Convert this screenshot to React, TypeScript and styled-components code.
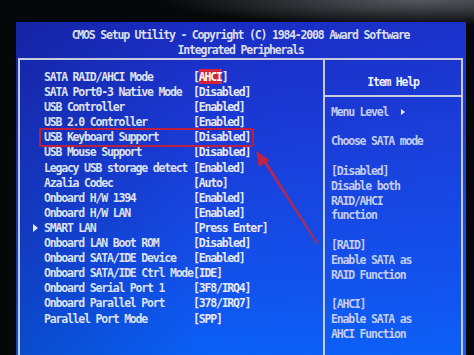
import styled, { createGlobalStyle } from 'styled-components';

const GlobalStyle = createGlobalStyle`
  html, body {
    margin: 0;
    padding: 0;
    background: #050608;
  }
`;

type Setting = { label: string; value: string; submenu?: boolean; selected?: boolean };

const settings: Setting[] = [
  { label: 'SATA RAID/AHCI Mode', value: 'AHCI', selected: true },
  { label: 'SATA Port0-3 Native Mode', value: 'Disabled' },
  { label: 'USB Controller', value: 'Enabled' },
  { label: 'USB 2.0 Controller', value: 'Enabled' },
  { label: 'USB Keyboard Support', value: 'Disabled' },
  { label: 'USB Mouse Support', value: 'Disabled' },
  { label: 'Legacy USB storage detect', value: 'Enabled' },
  { label: 'Azalia Codec', value: 'Auto' },
  { label: 'Onboard H/W 1394', value: 'Enabled' },
  { label: 'Onboard H/W LAN', value: 'Enabled' },
  { label: 'SMART LAN', value: 'Press Enter', submenu: true },
  { label: 'Onboard LAN Boot ROM', value: 'Disabled' },
  { label: 'Onboard SATA/IDE Device', value: 'Enabled' },
  { label: 'Onboard SATA/IDE Ctrl Mode', value: 'IDE' },
  { label: 'Onboard Serial Port 1', value: '3F8/IRQ4' },
  { label: 'Onboard Parallel Port', value: '378/IRQ7' },
  { label: 'Parallel Port Mode', value: 'SPP' },
];

const helpLines = [
  '',
  'Choose SATA mode',
  '',
  '[Disabled]',
  'Disable both',
  'RAID/AHCI',
  'function',
  '',
  '[RAID]',
  'Enable SATA as',
  'RAID Function',
  '',
  '[AHCI]',
  'Enable SATA as',
  'AHCI Function',
];

function App() {
  return (
    <>
      <GlobalStyle />
      <Monitor>
        <Screen>
          <Title>
            <div>CMOS Setup Utility - Copyright (C) 1984-2008 Award Software</div>
            <div>Integrated Peripherals</div>
          </Title>
          <Frame>
            <SettingsList>
              {settings.map((s) => (
                <Row key={s.label}>
                  <Marker>{s.submenu ? <Triangle $size={4} /> : null}</Marker>
                  <Label>{s.label}</Label>
                  <Value>
                    [{s.selected ? <Highlight>{s.value}</Highlight> : s.value}]
                  </Value>
                </Row>
              ))}
            </SettingsList>
            <HelpPanel>
              <HelpHeader>Item Help</HelpHeader>
              <HelpBody>
                <HelpLine>
                  Menu Level
                  <Triangle $size={3.5} $gap={13} />
                </HelpLine>
                {helpLines.map((line, i) => (
                  <HelpLine key={i}>{line || '\u00a0'}</HelpLine>
                ))}
              </HelpBody>
            </HelpPanel>
          </Frame>
        </Screen>
        <Annotation width="474" height="355" viewBox="0 0 474 355">
          <rect x="40" y="129" width="213" height="17" fill="none" stroke="#bd1f3e" strokeWidth="2" rx="1" />
          <polygon points="264,163 266.5,161.5 318,243 316.5,244" fill="#b8284a" />
          <polygon points="256,151 269.5,160 259,167" fill="#c02444" />
        </Annotation>
      </Monitor>
    </>
  );
}

const Monitor = styled.div`
  position: relative;
  width: 474px;
  height: 355px;
  overflow: hidden;
  box-sizing: border-box;
  padding: 22px 8px 0 16px;
  background:
    radial-gradient(ellipse 260px 26px at 420px 0px, #55595c 0%, #33363a 45%, rgba(10, 11, 13, 0) 100%),
    #060709;
`;

const Screen = styled.div`
  height: 100%;
  box-sizing: border-box;
  padding: 6px 3px 0 2px;
  background:
    linear-gradient(90deg, rgba(8, 12, 80, 0.25) 0%, rgba(8, 12, 80, 0) 40%, rgba(30, 90, 255, 0.12) 100%),
    linear-gradient(180deg, #1a2cc2 0%, #1a3bd6 35%, #1250ea 75%, #0a60f5 100%);
  font-family: 'DejaVu Sans Mono', 'Liberation Mono', monospace;
  font-weight: bold;
  font-size: 11.5px;
  letter-spacing: -1.2px;
  line-height: 15px;
  color: #dde1ee;
  white-space: pre;
`;

const Title = styled.div`
  text-align: center;
  color: #dadeec;
  line-height: 15px;
  height: 30px;
`;

const Frame = styled.div`
  display: grid;
  grid-template-columns: 305px 1fr;
  height: 320px;
  border: 2px solid #c6cbe0;
  border-bottom: none;
`;

const SettingsList = styled.div`
  border-right: 2px solid #c6cbe0;
  padding: 10px 0 0 13px;
`;

const Row = styled.div`
  display: grid;
  grid-template-columns: 11px 149px auto;
  height: 15.1px;
  line-height: 15.1px;
  align-items: center;
`;

const Marker = styled.span`
  display: flex;
  align-items: center;
`;

const Label = styled.span`
  color: #dde1ee;
`;

const Value = styled.span`
  color: #e6e9f4;
`;

const Highlight = styled.span`
  background: #d4243a;
  color: #ffffff;
  padding: 1px 0 0;
`;

const Triangle = styled.span<{ $size: number; $gap?: number }>`
  display: inline-block;
  width: 0;
  height: 0;
  vertical-align: middle;
  margin-left: ${(p) => p.$gap ?? 0}px;
  border-left: ${(p) => p.$size * 1.3}px solid #e8ebf5;
  border-top: ${(p) => p.$size}px solid transparent;
  border-bottom: ${(p) => p.$size}px solid transparent;
`;

const HelpPanel = styled.div`
  display: flex;
  flex-direction: column;
`;

const HelpHeader = styled.div`
  height: 37px;
  box-sizing: border-box;
  padding-top: 15px;
  text-align: center;
  color: #eef0f8;
  border-bottom: 2px solid #c6cbe0;
`;

const HelpBody = styled.div`
  padding: 7.5px 0 0 6px;
  color: #c4cdef;
`;

const HelpLine = styled.div`
  height: 14.85px;
  line-height: 14.85px;
  display: flex;
  align-items: center;
`;

const Annotation = styled.svg`
  position: absolute;
  left: 0;
  top: 0;
  pointer-events: none;
`;

export default App;
